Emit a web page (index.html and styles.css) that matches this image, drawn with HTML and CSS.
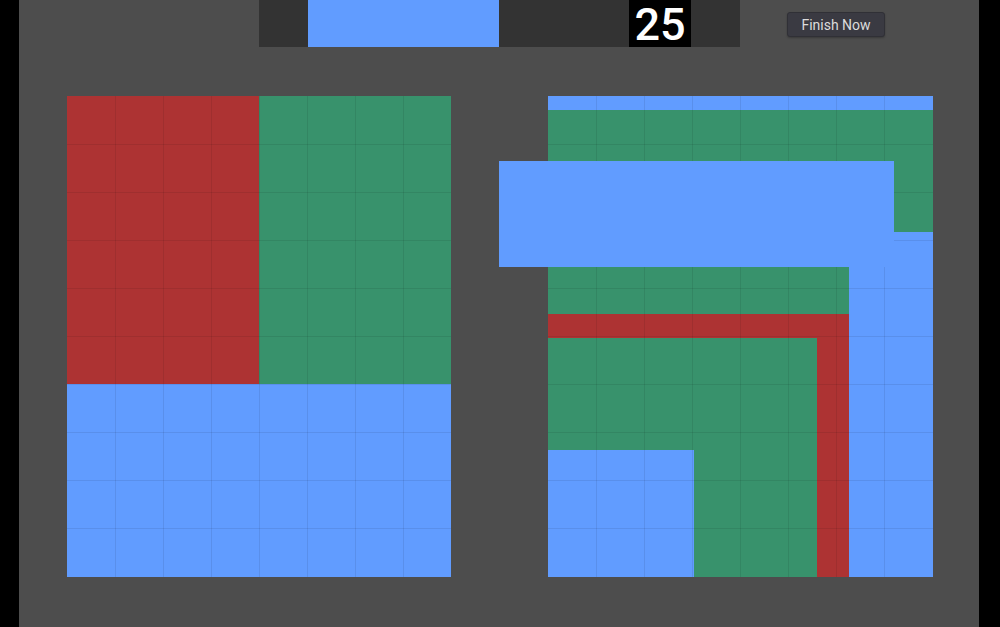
FILE: index.html
```html
<!DOCTYPE html>
<html>
<head>
<meta charset="utf-8">
<link rel="stylesheet" href="styles.css">
</head>
<body>
<div class="panel">
  <div class="header">
    <div class="bar">
      <div class="progress"></div>
      <div class="count">25</div>
    </div>
    <button class="finish">Finish Now</button>
  </div>
  <div class="boards">
    <div class="board">
      <svg class="canvas" viewBox="0 0 384 481" width="384" height="481">
        <rect x="0" y="0" width="192" height="288" fill="#ad3333"/>
        <rect x="192" y="0" width="192" height="288" fill="#38926c"/>
        <rect x="0" y="288" width="384" height="193" fill="#619cff"/>
        <g class="lines">
          <path d="M48.5 0V481M96.5 0V481M144.5 0V481M192.5 0V481M240.5 0V481M288.5 0V481M336.5 0V481M0 48.5H384M0 96.5H384M0 144.5H384M0 192.5H384M0 240.5H384M0 288.5H384M0 336.5H384M0 384.5H384M0 432.5H384"/>
        </g>
      </svg>
    </div>
    <div class="board target">
      <svg class="canvas" viewBox="0 0 385 481" width="385" height="481">
        <rect x="0" y="0" width="385" height="14" fill="#619cff"/>
        <rect x="0" y="14" width="385" height="122" fill="#38926c"/>
        <rect x="301" y="136" width="84" height="345" fill="#619cff"/>
        <rect x="0" y="136" width="301" height="82" fill="#38926c"/>
        <rect x="0" y="218" width="301" height="24" fill="#ad3333"/>
        <rect x="269" y="242" width="32" height="239" fill="#ad3333"/>
        <rect x="0" y="242" width="269" height="239" fill="#38926c"/>
        <rect x="0" y="354" width="146" height="127" fill="#619cff"/>
        <g class="lines">
          <path d="M48.5 0V481M96.5 0V481M144.5 0V481M192.5 0V481M240.5 0V481M288.5 0V481M336.5 0V481M0 48.5H385M0 96.5H385M0 144.5H385M0 192.5H385M0 240.5H385M0 288.5H385M0 336.5H385M0 384.5H385M0 432.5H385"/>
        </g>
      </svg>
      <div class="piece"></div>
    </div>
  </div>
</div>
</body>
</html>
```
FILE: styles.css
```css
html, body {
  margin: 0;
  padding: 0;
  background: #000;
  height: 100%;
  overflow: hidden;
}
.panel {
  margin-left: 19px;
  width: 960px;
  height: 627px;
  background: #4d4d4d;
  display: flex;
  flex-direction: column;
}
.header {
  display: flex;
  align-items: flex-start;
  height: 47px;
  padding-left: 240px;
}
.bar {
  width: 481px;
  height: 47px;
  background: #333333;
  display: flex;
  padding-left: 49px;
  box-sizing: border-box;
}
.progress {
  width: 191px;
  height: 47px;
  background: #619cff;
}
.count {
  margin-left: 130px;
  width: 62px;
  height: 47px;
  background: #000;
  color: #fff;
  font-family: Roboto, "Liberation Sans", sans-serif;
  font-size: 45px;
  font-weight: 500;
  line-height: 49px;
  text-align: center;
}
.finish {
  margin-left: 47px;
  margin-top: 12px;
  width: 98px;
  height: 25px;
  padding: 0;
  background: #3a3a42;
  border: 1px solid #303036;
  border-radius: 3px;
  color: #dcdcdc;
  font-family: Roboto, "Liberation Sans", sans-serif;
  font-size: 14px;
  box-shadow: 0 1px 2px rgba(0,0,0,0.25);
}
.boards {
  display: flex;
  margin-top: 49px;
  padding-left: 48px;
  gap: 97px;
}
.board {
  position: relative;
  width: 384px;
  height: 481px;
}
.board.target {
  width: 385px;
}
.canvas {
  display: block;
}
.lines path {
  stroke: rgba(0, 0, 0, 0.08);
  stroke-width: 1;
  fill: none;
}
.piece {
  position: absolute;
  left: -49px;
  top: 65px;
  width: 395px;
  height: 106px;
  background: #619cff;
}
```
